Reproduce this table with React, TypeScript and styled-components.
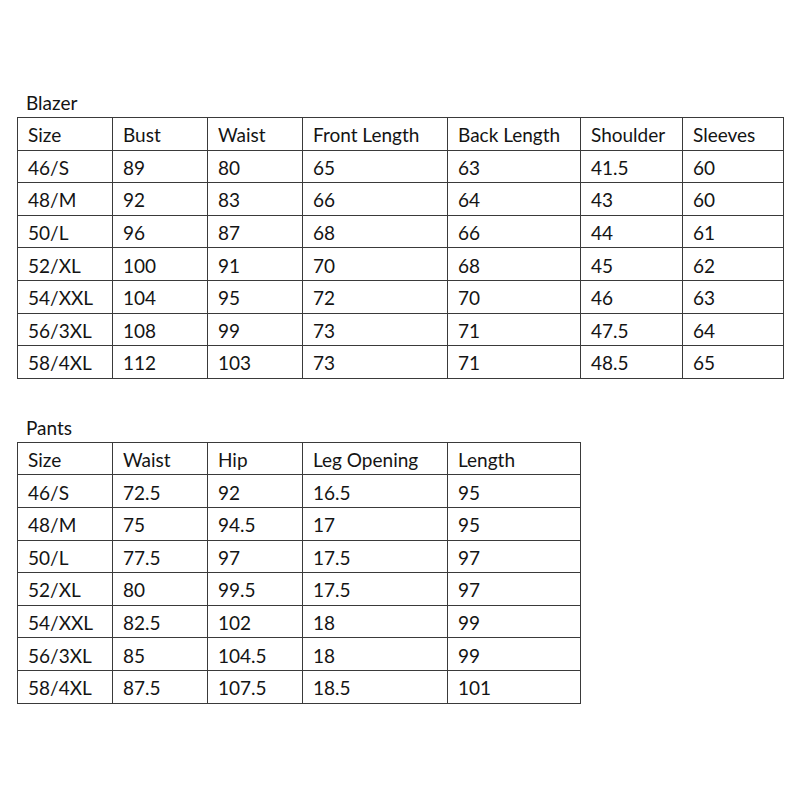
import styled, { createGlobalStyle } from "styled-components";

const GlobalStyle = createGlobalStyle`
  html, body {
    margin: 0;
    padding: 0;
    background: #ffffff;
  }
`

const Page = styled.main`
  width: 800px;
  height: 800px;
  box-sizing: border-box;
  padding: 88px 0 0 17px;
  display: flex;
  flex-direction: column;
  gap: 34px;
  font-family: Lato, "Open Sans", sans-serif;
  color: #141414;
`

const Section = styled.section`
  display: flex;
  flex-direction: column;
`

const Title = styled.h2`
  margin: 0 0 0 9px;
  font-size: 19px;
  font-weight: 400;
  line-height: 29px;
`

const Table = styled.table`
  border-collapse: collapse;
  table-layout: fixed;
  border: 1px solid #3a3a3a;
`

const Cell = styled.td`
  border: 1px solid #3a3a3a;
  height: 32.6px;
  padding: 2px 0 0 10px;
  font-size: 19px;
  font-weight: 400;
  text-align: left;
  white-space: nowrap;
  box-sizing: border-box;
`

type SizeTable = {
  title: string,
  widths: number[],
  header: string[],
  rows: string[][],
}

const blazer: SizeTable = {
  title: "Blazer",
  widths: [95, 95, 95, 145, 133, 102, 101],
  header: ["Size", "Bust", "Waist", "Front Length", "Back Length", "Shoulder", "Sleeves"],
  rows: [
    ["46/S", "89", "80", "65", "63", "41.5", "60"],
    ["48/M", "92", "83", "66", "64", "43", "60"],
    ["50/L", "96", "87", "68", "66", "44", "61"],
    ["52/XL", "100", "91", "70", "68", "45", "62"],
    ["54/XXL", "104", "95", "72", "70", "46", "63"],
    ["56/3XL", "108", "99", "73", "71", "47.5", "64"],
    ["58/4XL", "112", "103", "73", "71", "48.5", "65"],
  ],
}

const pants: SizeTable = {
  title: "Pants",
  widths: [95, 95, 95, 145, 133],
  header: ["Size", "Waist", "Hip", "Leg Opening", "Length"],
  rows: [
    ["46/S", "72.5", "92", "16.5", "95"],
    ["48/M", "75", "94.5", "17", "95"],
    ["50/L", "77.5", "97", "17.5", "97"],
    ["52/XL", "80", "99.5", "17.5", "97"],
    ["54/XXL", "82.5", "102", "18", "99"],
    ["56/3XL", "85", "104.5", "18", "99"],
    ["58/4XL", "87.5", "107.5", "18.5", "101"],
  ],
}

function SizeChart({ title, widths, header, rows }: SizeTable) {
  const total = widths.reduce((a, b) => a + b, 0)
  return <Section>
    <Title>{title}</Title>
    <Table style={{ width: total + 1 }}>
      <colgroup>
        {widths.map((w, i) => <col key={i} style={{ width: w }} />)}
      </colgroup>
      <thead>
        <tr>
          {header.map(h => <Cell as="th" key={h}>{h}</Cell>)}
        </tr>
      </thead>
      <tbody>
        {rows.map(row => <tr key={row[0]}>
          {row.map((v, i) => <Cell key={i}>{v}</Cell>)}
        </tr>)}
      </tbody>
    </Table>
  </Section>
}

export default function App() {
  return <>
    <GlobalStyle />
    <Page>
      <SizeChart {...blazer} />
      <SizeChart {...pants} />
    </Page>
  </>
}
